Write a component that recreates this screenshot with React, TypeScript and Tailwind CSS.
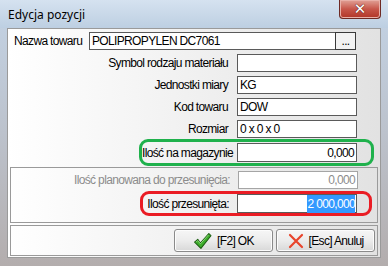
import React from 'react';

const label = "whitespace-nowrap font-['Liberation_Sans',Arial,sans-serif] text-[12px] tracking-[-0.65px] text-black";

function Field({ value, right, width = 'w-[120px]', h = 'h-[18px]' }: { value?: string; right?: boolean; width?: string; h?: string }) {
  return (
    <div
      className={`${width} ${h} flex items-center border border-[#5a5a5a] bg-white px-[2px] ${label} ${right ? 'justify-end' : ''}`}
    >
      {value}
    </div>
  );
}

function Row({ text, value, right }: { text: string; value?: string; right?: boolean }) {
  return (
    <div className="flex h-[18px] items-center">
      <div className={`w-[221px] pr-[1px] text-right ${label}`}>{text}</div>
      <div className="ml-[8px]">
        <Field value={value} right={right} />
      </div>
    </div>
  );
}

function CheckIcon() {
  return (
    <svg width="19" height="18" viewBox="0 0 18 17">
      <path
        d="M1.5 9.5 L4.5 7 L7 10.5 L15 1.5 L17 3.5 L7.5 15.5 Z"
        fill="#3dae2b"
        stroke="#1d5e12"
        strokeWidth="1"
        strokeLinejoin="round"
      />
      <path d="M3 9.3 L4.6 8 L7 11.2 L14.8 2.6" fill="none" stroke="#9be28a" strokeWidth="0.8" />
    </svg>
  );
}

function XIcon() {
  return (
    <svg width="16" height="16" viewBox="0 0 16 16">
      <path d="M2 2 L14 14 M14 2 L2 14" stroke="#e8452c" strokeWidth="2.2" strokeLinecap="round" />
    </svg>
  );
}

function WinButton({ icon, text }: { icon: React.ReactNode; text: string }) {
  return (
    <button className="flex h-[23px] w-[99px] items-center justify-center gap-[5px] rounded-[3px] border border-[#8a8a8a] bg-linear-to-b from-[#f6f6f6] via-[#ececec] to-[#d8d8d8] shadow-[inset_0_0_0_1px_#fcfcfc]">
      {icon}
      <span className={label}>{text}</span>
    </button>
  );
}

export default function App() {
  return (
    <div className="flex h-[266px] w-[388px] flex-col overflow-hidden bg-linear-to-b from-[#c3d3e5] via-[#bcc2cc] to-[#b3adad] px-[7px] pb-[8px]">
      {/* title bar */}
      <div className="relative -mx-[7px] flex h-[28px] shrink-0 items-start bg-linear-to-b from-[#d5e2f0] to-[#bdcfe2] px-[8px]">
        <span className="mt-[6px] font-['Noto_Sans',sans-serif] text-[12px] text-black">Edycja pozycji</span>
        <div className="absolute right-[7px] top-0 flex h-[19px] w-[42px] items-center justify-center rounded-b-[4px] border border-t-0 border-[#6e2a24] bg-linear-to-b from-[#e0a197] via-[#c7564a] to-[#b13426] shadow-[inset_0_0_0_1px_#e9b0a8]">
          <span className="font-['DejaVu_Sans',sans-serif] text-[15px] font-bold leading-none text-white [text-shadow:0_0_1px_#5a1a14,0_0_1px_#5a1a14]">
            ✕
          </span>
        </div>
      </div>

      {/* content */}
      <div className="flex flex-1 flex-col border border-[#9a9a9a] bg-linear-to-r from-white to-[#e2e2e2]">
        {/* panel 1 */}
        <div className="flex h-[138px] shrink-0 flex-col">
          <div className="mt-[3px] flex h-[18px] items-center">
            <div className={`w-[81px] pl-[6px] ${label}`}>Nazwa towaru</div>
            <Field value="POLIPROPYLEN DC7061" width="w-[247px]" />
            <div className="-ml-px flex h-[18px] w-[21px] items-end justify-center border border-[#3a3a3a] bg-[#f2f2f2] pb-[2px]">
              <span className={`${label} leading-none`}>...</span>
            </div>
          </div>
          <div className="mt-[4px] flex flex-col gap-[4px]">
            <Row text="Symbol rodzaju materiału" />
            <Row text="Jednostki miary" value="KG" />
            <Row text="Kod towaru" value="DOW" />
            <Row text="Rozmiar" value="0 x 0 x 0" />
          </div>
          <div className="ml-[131px] mt-[1px] flex h-[27px] w-[235px] items-center rounded-[9px] border-[3px] border-[#1fb14c]">
            <div className={`w-[87px] text-right ${label}`}>Ilość na magazynie</div>
            <div className="ml-[8px]">
              <Field value="0,000" right h="h-[19px]" />
            </div>
          </div>
        </div>

        {/* panel 2 */}
        <div className="mx-[2px] flex h-[56px] shrink-0 flex-col border border-[#9a9a9a]">
          <div className="mt-[3px] flex h-[18px] items-center">
            <div className={`w-[219px] text-right ${label} !text-[#8c8c8c]`}>Ilość planowana do przesunięcia:</div>
            <div className="ml-[8px] flex h-[18px] w-[120px] items-center justify-end border border-[#a5a5a5] bg-white px-[2px]">
              <span className={`${label} !text-[#8c8c8c]`}>0,000</span>
            </div>
          </div>
          <div className="ml-[129px] mt-[2px] flex h-[25px] w-[232px] items-center rounded-[9px] border-[3px] border-[#ea1c24]">
            <div className={`w-[86px] text-right ${label}`}>Ilość przesunięta:</div>
            <div className="ml-[8px] flex h-[19px] w-[120px] items-center justify-end border border-[#5a5a5a] bg-white px-[1px]">
              <span className={`${label} bg-[#3399ff] !text-white`}>2 000,000</span>
            </div>
          </div>
        </div>

        {/* panel 3 */}
        <div className="mx-[2px] mt-[2px] flex h-[31px] shrink-0 items-center justify-end gap-[3px] border border-[#9a9a9a] pr-[2px]">
          <WinButton icon={<CheckIcon />} text="[F2] OK" />
          <WinButton icon={<XIcon />} text="[Esc] Anuluj" />
        </div>
      </div>
    </div>
  );
}
